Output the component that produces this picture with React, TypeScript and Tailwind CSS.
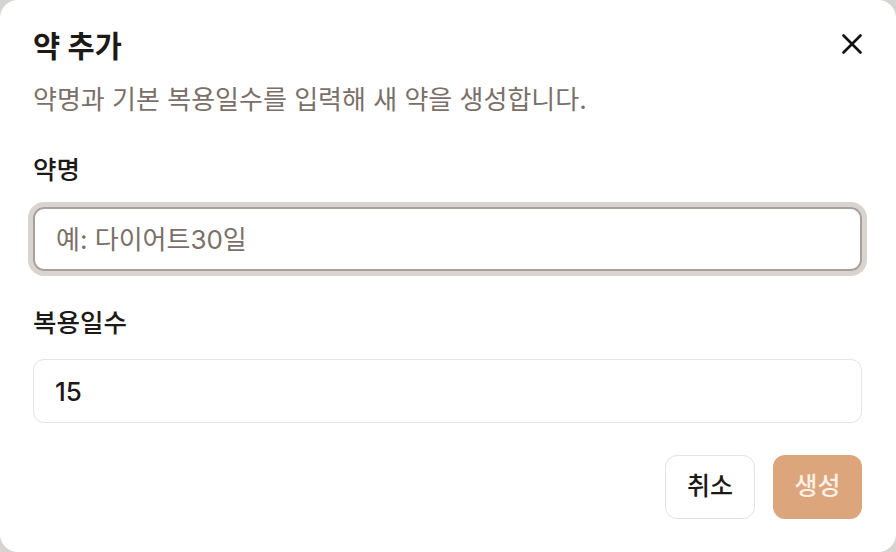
import React from "react";

export default function App() {
  const font = { fontFamily: 'Inter, "Noto Sans CJK KR", sans-serif' };
  return (
    <div className="w-[896px] h-[552px] bg-[#d7d3d0]" style={font}>
      <div className="relative flex h-full w-full flex-col rounded-[18px] bg-white pl-[33px] pr-[34px] pt-[25px]">
        <h2 className="text-[29.5px] font-semibold leading-[42px] text-[#1c1917]">약 추가</h2>
        <button className="absolute left-[840px] top-[32px] h-[24px] w-[24px]" aria-label="close">
          <svg width="24" height="24" viewBox="0 0 24 24" fill="none" stroke="#111" strokeWidth="2.6" strokeLinecap="round">
            <path d="M3.5 3.5L20.5 20.5M20.5 3.5L3.5 20.5" />
          </svg>
        </button>
        <p className="mt-[15px] text-[26px] leading-[36px] text-[#7b6f69]">
          약명과 기본 복용일수를 입력해 새 약을 생성합니다.
        </p>
        <label className="mt-[34px] text-[25.5px] font-medium leading-[36px] text-[#1c1917]">약명</label>
        <div className="mt-[19px] flex h-[64px] items-center rounded-[11px] border-2 border-[#a8a09b] pl-[21px] ring-[5px] ring-[#d9d4d0] text-[26px] text-[#7b6f69]">
          예: 다이어트30일
        </div>
        <label className="mt-[34px] text-[25.5px] font-medium leading-[36px] text-[#1c1917]">복용일수</label>
        <div className="mt-[18px] flex h-[64px] items-center rounded-[11px] border-[1.5px] border-[#e7e3e0] pl-[21px] text-[26px] font-medium text-[#1c1917]">
          15
        </div>
        <div className="mt-[32px] flex justify-end gap-[18px]">
          <button className="flex h-[64px] w-[90px] items-center justify-center rounded-[12px] border-[1.5px] border-[#e6e2df] bg-white text-[25px] font-medium text-[#1c1917]">
            취소
          </button>
          <button className="flex h-[64px] w-[89px] items-center justify-center rounded-[12px] bg-[#dda57c] text-[25px] font-medium text-[#fcf0e7]">
            생성
          </button>
        </div>
      </div>
    </div>
  );
}
